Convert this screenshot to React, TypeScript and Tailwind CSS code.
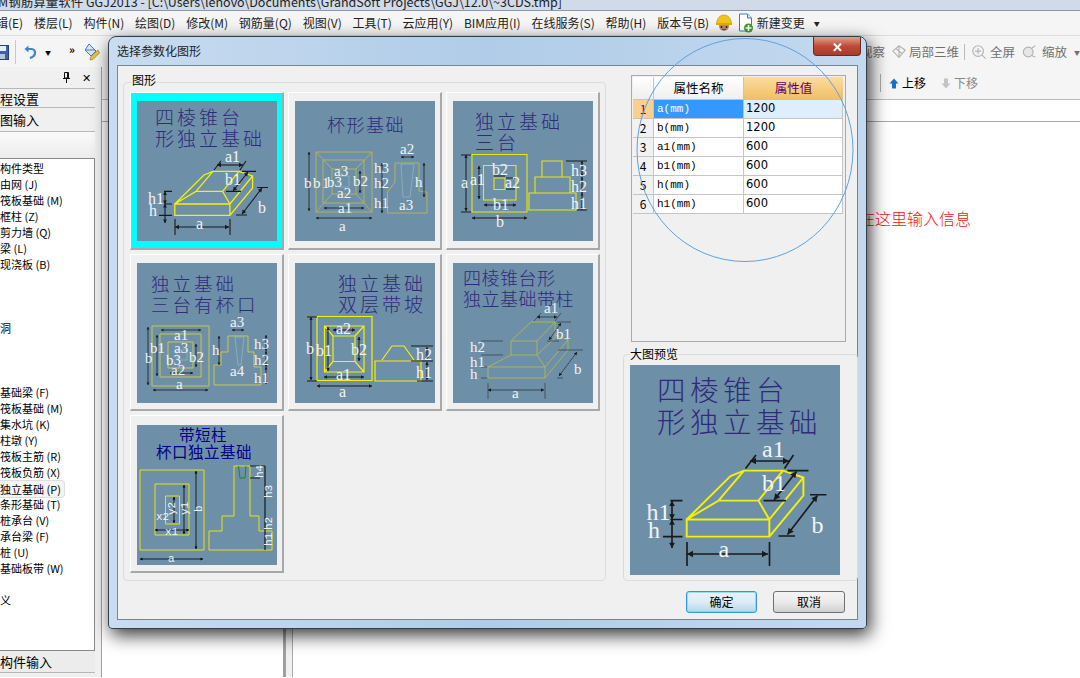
import React from "react";

const cjk = '"Noto Sans CJK SC", sans-serif';
const num = '"Liberation Serif", serif';
const black = "#1a1a1a";

const menus = ["辑(E)", "楼层(L)", "构件(N)", "绘图(D)", "修改(M)", "钢筋量(Q)", "视图(V)", "工具(T)", "云应用(Y)", "BIM应用(I)", "在线服务(S)", "帮助(H)", "版本号(B)"];

const listItems: [string, number][] = [
  ["构件类型", 168], ["由网 (J)", 184], ["筏板基础 (M)", 200], ["框柱 (Z)", 216], ["剪力墙 (Q)", 232], ["梁 (L)", 248], ["现浇板 (B)", 264],
  ["洞", 328], ["基础梁 (F)", 392], ["筏板基础 (M)", 408], ["集水坑 (K)", 424], ["柱墩 (Y)", 440], ["筏板主筋 (R)", 456], ["筏板负筋 (X)", 472],
  ["独立基础 (P)", 488], ["条形基础 (T)", 504], ["桩承台 (V)", 520], ["承台梁 (F)", 536], ["桩 (U)", 552], ["基础板带 (W)", 568], ["义", 600],
];

const rows = [
  ["1", "a(mm)", "1200"], ["2", "b(mm)", "1200"], ["3", "a1(mm)", "600"],
  ["4", "b1(mm)", "600"], ["5", "h(mm)", "600"], ["6", "h1(mm)", "600"],
];

// dimension line with arrow heads on both ends
function Dim({ x1, y1, x2, y2, s = 3, w = 0.8, c = black }: { x1: number; y1: number; x2: number; y2: number; s?: number; w?: number; c?: string }) {
  const len = Math.hypot(x2 - x1, y2 - y1) || 1;
  const ux = (x2 - x1) / len;
  const uy = (y2 - y1) / len;
  const head = (x: number, y: number, d: number) =>
    `${x},${y} ${x + d * ux * s - uy * s * 0.55},${y + d * uy * s + ux * s * 0.55} ${x + d * ux * s + uy * s * 0.55},${y + d * uy * s - ux * s * 0.55}`;
  return (
    <g>
      <line x1={x1} y1={y1} x2={x2} y2={y2} stroke={c} strokeWidth={w} />
      <polygon points={head(x1, y1, 1)} fill={c} />
      <polygon points={head(x2, y2, -1)} fill={c} />
    </g>
  );
}

function Ticks({ d, w = 0.8, c = black }: { d: string; w?: number; c?: string }) {
  return <path d={d} stroke={c} strokeWidth={w} fill="none" />;
}

function Title({ lines, size = 19, gap = 22, fill = "#2f2a7c", weight = 300 }: { lines: [string, number, number][]; size?: number; gap?: number; fill?: string; weight?: number }) {
  return (
    <g fontFamily={cjk} fontSize={size} fill={fill} fontWeight={weight}>
      {lines.map(([t, x, y]) => (
        <text key={t} x={x} y={y} letterSpacing={gap - size}>{t}</text>
      ))}
    </g>
  );
}

function Labels({ items, size = 14 }: { items: [string, number, number][]; size?: number }) {
  return (
    <g fontFamily={num} fontSize={size} fill="#f2f4f6">
      {items.map(([t, x, y], i) => (
        <text key={i} x={x} y={y}>{t}</text>
      ))}
    </g>
  );
}

function Drawing1() {
  return (
    <>
      <Title lines={[["四棱锥台", 18, 24], ["形独立基础", 18, 45]]} />
      <path d="M37.8 103H92.9V114.4H37.8ZM37.8 103L67 74L76 70.4H102L115.6 75V87L92.9 114.4M92.9 103L115.6 75M37.8 103L59 90.4H85.6L92.9 103M59 90.4L76 70.4M85.6 90.4L102 70.4" fill="none" stroke="#f4f00c" strokeWidth={1.3} />
      <Ticks w={1.1} d="M77 69L84 60M103 69L109 60M105 70.4H119M89 90.4H104M120 86.5H131M99 114H110M38 118V134M93 118V134M27 90.4H35M27 103H35M22 114.4H35" />
      <Dim x1={80} y1={64} x2={106} y2={64} s={4} w={1.1} />
      <Dim x1={111} y1={71} x2={96} y2={90} s={4} w={1.1} />
      <Dim x1={125} y1={87} x2={105} y2={113} s={4} w={1.1} />
      <Dim x1={38} y1={126} x2={92} y2={126} s={4} w={1.1} />
      <Dim x1={28} y1={90.5} x2={28} y2={103} s={3.5} w={1.1} />
      <Dim x1={28} y1={103} x2={28} y2={122} s={3.5} w={1.1} />
      <Labels size={16} items={[["a1", 88, 61], ["b1", 88, 84], ["b", 121, 112], ["h1", 11, 103], ["h", 12, 115], ["a", 59, 128]]} />
    </>
  );
}

function Drawing2() {
  const o = "#b0b35c";
  return (
    <>
      <Title lines={[["杯形基础", 32, 31]]} size={18} gap={19.5} />
      <path d="M21 51H77V111H21ZM28 59H69V102H28ZM37 68H61V93H37ZM21 51L37 68M77 51L61 68M21 111L37 93M77 111L61 93M100 62H124V90L132 91V112H92.5V91L100 81Z" fill="none" stroke={o} strokeWidth={1} />
      <path d="M106 63H119L115 96H108ZM43 75H54V86H43Z" fill="none" stroke="#92bcc0" strokeWidth={0.7} />
      <Dim x1={14} y1={51} x2={14} y2={110} s={2.5} />
      <Dim x1={21} y1={117} x2={77} y2={117} s={2.5} />
      <Dim x1={29} y1={107} x2={69} y2={107} s={2.5} />
      <Dim x1={65} y1={70} x2={65} y2={92} s={2.5} />
      <Dim x1={106} y1={56} x2={119} y2={56} s={2.5} />
      <Dim x1={129} y1={62} x2={129} y2={96} s={2.5} />
      <Dim x1={87} y1={62} x2={87} y2={112} s={2.5} />
      <Labels size={15} items={[["b", 9, 87], ["b", 18, 87], ["1", 27, 87], ["b3", 32, 86], ["a3", 39, 75], ["b2", 58, 85], ["a2", 42, 97], ["a1", 43, 112], ["a", 44, 130], ["a2", 105, 53], ["h3", 79, 72], ["h2", 79, 87], ["h", 120, 86], ["h1", 79, 107], ["a3", 104, 109]]} />
    </>
  );
}

function Drawing3() {
  return (
    <>
      <Title lines={[["独立基础", 22, 28], ["三台", 22, 49]]} />
      <path d="M19 53.5H74V111H19ZM30.5 64.5H63V99H30.5ZM41 77H52V88.5H41ZM76 92H123V109H76ZM82 76H117V92H82ZM89 60H109V76H89Z" fill="none" stroke="#e8e80c" strokeWidth={1.1} />
      <Dim x1={13} y1={54} x2={13} y2={110} s={3} w={1} />
      <Dim x1={26} y1={65} x2={26} y2={98} s={3} w={1} />
      <Dim x1={31} y1={104} x2={63} y2={104} s={3} w={1} />
      <Dim x1={19} y1={117} x2={74} y2={117} s={3} w={1} />
      <Dim x1={129} y1={60} x2={129} y2={75} s={2.5} w={1} />
      <Dim x1={129} y1={76} x2={129} y2={92} s={2.5} w={1} />
      <Dim x1={129} y1={92} x2={129} y2={109} s={2.5} w={1} />
      <Ticks w={1} d="M8 54H18M8 111H18M113 60H134M124 109H134M41 75H52M53 77H62M53 88H62" />
      <Labels size={16} items={[["a", 8, 87], ["a1", 17, 84], ["b2", 39, 74], ["a2", 52, 87], ["b1", 40, 109], ["b", 43, 126], ["h3", 118, 75], ["h2", 118, 91], ["h1", 118, 108]]} />
    </>
  );
}

function Drawing4() {
  const o = "#c4c84a";
  return (
    <>
      <Title lines={[["独立基础", 14, 28], ["三台有杯口", 14, 49]]} size={18.5} gap={21.5} />
      <path d="M15 63H72V123H15ZM23 71H64V114H23ZM31 79H56V105H31ZM91 73H111V89H117V104H124V122H77V102L84 102V89H91Z" fill="none" stroke={o} strokeWidth={1} />
      <path d="M98 74H107L104 102H101ZM40 87H50V97H40Z" fill="none" stroke="#92bcc0" strokeWidth={0.7} />
      <Dim x1={11} y1={64} x2={11} y2={122} s={2.5} />
      <Dim x1={16} y1={127} x2={71} y2={127} s={2.5} />
      <Dim x1={24} y1={67} x2={64} y2={67} s={2.5} />
      <Dim x1={33} y1={110} x2={56} y2={110} s={2.5} />
      <Dim x1={95} y1={67} x2={107} y2={67} s={2.5} />
      <Dim x1={82} y1={73} x2={82} y2={102} s={2.5} />
      <Dim x1={20} y1={72} x2={20} y2={113} s={2.5} />
      <Dim x1={59} y1={81} x2={59} y2={104} s={2.5} />
      <Dim x1={129} y1={72} x2={129} y2={88} s={2.5} />
      <Dim x1={129} y1={88} x2={129} y2={104} s={2.5} />
      <Dim x1={129} y1={104} x2={129} y2={121} s={2.5} />
      <Labels size={15} items={[["b", 8, 100], ["b1", 13, 90], ["a1", 37, 77], ["a3", 37, 90], ["b3", 29, 102], ["b2", 52, 99], ["a2", 34, 112], ["a", 39, 126], ["a3", 93, 64], ["h", 75, 92], ["h3", 117, 86], ["h2", 117, 102], ["a4", 93, 113], ["h1", 117, 120]]} />
    </>
  );
}

function Drawing5() {
  return (
    <>
      <Title lines={[["独立基础", 43, 28], ["双层带坡", 43, 49]]} />
      <path d="M22 53.5H77V117.5H22ZM29.5 63H69V109H29.5ZM38 73H60V98.5H38ZM29.5 63L38 73M69 63L60 73M29.5 109L38 98.5M69 109L60 98.5M80 98H126V118H80ZM87 97L97 83H109L119 97" fill="none" stroke="#f4f00c" strokeWidth={1.2} />
      <Ticks w={1} d="M12 54H22M12 118H22M116 83H138M116 98H138M122 118H138" />
      <Dim x1={16} y1={54} x2={16} y2={117} w={1} />
      <Dim x1={33} y1={64} x2={33} y2={108} w={1} />
      <Dim x1={38} y1={67} x2={60} y2={67} w={1} />
      <Dim x1={29} y1={114} x2={69} y2={114} w={1} />
      <Dim x1={22} y1={123} x2={77} y2={123} w={1} />
      <Dim x1={64} y1={74} x2={64} y2={98} w={1} />
      <Dim x1={132} y1={84} x2={132} y2={97} w={1} />
      <Dim x1={132} y1={99} x2={132} y2={117} w={1} />
      <Labels size={16} items={[["b", 11, 91], ["b1", 21, 93], ["a2", 41, 71], ["b2", 56, 92], ["a1", 41, 117], ["a", 44, 134], ["h2", 121, 97], ["h1", 121, 115]]} />
    </>
  );
}

function Drawing6() {
  const o = "#b9bd48";
  return (
    <>
      <Title lines={[["四棱锥台形", 10, 22], ["独立基础带柱", 10, 43]]} size={18} gap={18.5} />
      <path d="M35 104H92V115H35ZM58 78H84V92H58ZM58 78L78 59H102L84 78M102 59V75L84 92M35 104L58 92M92 104L84 92M92 104L115 77V87L92 115M102 72L115 77" fill="none" stroke={o} strokeWidth={0.8} />
      <Ticks d="M28 78H50M28 92H50M28 104H34M28 115H34M35 120V136M92 120V136M81 58L88 50M102 58L108 50M104 59H118M94 78H106M105 87H130M104 115H110" w={0.5} />
      <Dim x1={84} y1={54} x2={104} y2={54} w={0.6} />
      <Dim x1={108} y1={60} x2={96} y2={77} w={0.6} />
      <Dim x1={124} y1={89} x2={106} y2={113} w={0.6} />
      <Dim x1={35} y1={127} x2={91} y2={127} w={0.6} />
      <Labels size={15} items={[["a1", 91, 50], ["b1", 103, 76], ["h2", 17, 89], ["h1", 17, 104], ["h", 17, 116], ["b", 121, 111], ["a", 59, 135]]} />
    </>
  );
}

function Drawing7() {
  return (
    <>
      <Title lines={[["带短柱", 42, 16], ["杯口独立基础", 19, 33]]} size={15.5} gap={16} fill="#000088" weight={400} />
      <path d="M3 45H67V125H3ZM18 59H52V110H18ZM28.5 71H42.5V99H28.5ZM97 41V91H85V106H72V125H135V106H122V91H113V41Z" fill="none" stroke="#e4e40c" strokeWidth={1} />
      <path d="M101.5 41L103 53H108L109 41" fill="none" stroke="#128c20" strokeWidth={1} />
      <Ticks d="M113 41H128M113 53H123" w={0.8} c="#000" />
      <Dim x1={59} y1={46} x2={59} y2={124} s={2.5} c="#000" />
      <Dim x1={47} y1={60} x2={47} y2={109} s={2.5} c="#000" />
      <Dim x1={37} y1={72} x2={37} y2={98} s={2.5} c="#000" />
      <Dim x1={18} y1={105} x2={52} y2={105} s={2.5} c="#000" />
      <Dim x1={3} y1={134} x2={66} y2={134} s={2.5} c="#000" />
      <line x1={128} y1={41} x2={128} y2={125} stroke="#000" strokeWidth={1} />
      <g fontFamily='"Liberation Mono", monospace' fontSize={11} fill="#f2f4f6">
        <text x={28} y={110}>x1</text>
        <text x={19} y={95}>x2</text>
        <text x={31} y={137}>a</text>
        {([["y2", 38, 90], ["y1", 51, 90], ["b", 65, 87], ["h4", 126, 53], ["h3", 135, 73], ["h2", 135, 105], ["h1", 135, 121]] as [string, number, number][]).map(([t, x, y]) => (
          <text key={t} x={x} y={y} transform={`rotate(-90 ${x} ${y})`}>{t}</text>
        ))}
      </g>
    </>
  );
}

function Sketch({ size, children }: { size: number; children: React.ReactNode }) {
  return (
    <svg width={size} height={size} viewBox="0 0 140 140" className="block bg-[#6e8fa8]">
      {children}
    </svg>
  );
}

function Card({ selected, pt = "pt-2", children }: { selected?: boolean; pt?: string; children: React.ReactNode }) {
  return (
    <div className={`flex justify-center border-r-2 border-b-2 border-t border-l border-r-[#a8a8a8] border-b-[#a8a8a8] border-t-white border-l-white ${pt} ${selected ? "bg-[#00ffff]" : "bg-[#f0f0f0]"}`}>
      {children}
    </div>
  );
}

function HardHat() {
  return (
    <svg width="18" height="18" viewBox="0 0 18 18">
      <ellipse cx="9" cy="12" rx="5" ry="5" fill="#b98a68" />
      <path d="M1.5 10C2 4 5 1 9 1s7 3 7.5 9Z" fill="#f2c318" stroke="#b98a10" strokeWidth="0.6" />
      <rect x="1" y="9" width="16" height="2" fill="#e0aa10" />
      <circle cx="6.5" cy="13" r="0.9" fill="#222" />
      <circle cx="11.5" cy="13" r="0.9" fill="#222" />
      <path d="M7 15.5h4" stroke="#6a3c20" strokeWidth="0.8" />
    </svg>
  );
}

function NewDoc() {
  return (
    <svg width="16" height="20" viewBox="0 0 16 20">
      <path d="M1.5 1H9.5L13.5 5V18H1.5Z" fill="#fff" stroke="#3c7fb8" />
      <path d="M9.5 1V5H13.5" fill="#d8e8f4" stroke="#3c7fb8" />
      <circle cx="10.5" cy="15" r="4.5" fill="#3d9a2c" />
      <path d="M10.5 12V18M7.5 15H13.5" stroke="#fff" strokeWidth="1.6" />
    </svg>
  );
}

function ToolGlyph({ kind }: { kind: "cube" | "zoom" | "scale" }) {
  return (
    <svg width="16" height="16" viewBox="0 0 18 18" fill="none" stroke="#b4b4b4" strokeWidth="1.3">
      {kind === "cube" && <path d="M2 8L9 2L16 7L9 15ZM5.5 5L12.5 11M9 2V15" />}
      {kind === "zoom" && (
        <>
          <circle cx="8" cy="8" r="6" />
          <path d="M12.5 12.5L16.5 16.5M8 4.5V11.5M4.5 8H11.5" />
        </>
      )}
      {kind === "scale" && (
        <>
          <circle cx="7" cy="9" r="5.5" fill="#e6e6e6" />
          <path d="M11 4.5L15 2M11 13L15 15" />
        </>
      )}
    </svg>
  );
}

function SaveIcon() {
  return (
    <svg width="14" height="15" viewBox="0 0 14 15" className="-ml-[5px]">
      <rect x="0.5" y="0.5" width="13" height="14" fill="#3a62a8" stroke="#24427c" />
      <rect x="3" y="1" width="8" height="5" fill="#e8eef6" />
      <rect x="4" y="9" width="6" height="5" fill="#b8c4d4" />
    </svg>
  );
}

function UndoIcon() {
  return (
    <svg width="12" height="14" viewBox="0 0 12 14" fill="none">
      <path d="M2 4H7.5C10 4 11 6 11 7.5C11 10 9 12 6 13" stroke="#3c84cc" strokeWidth="2.2" />
      <path d="M4.5 0.5V7.5L0.5 4Z" fill="#3c84cc" />
    </svg>
  );
}

function PaintIcon() {
  return (
    <svg width="17" height="18" viewBox="0 0 17 18">
      <path d="M5 1L12 8L7 13L1 7Z" fill="#d8e4f2" stroke="#4d7cb0" />
      <path d="M1 7H11" stroke="#4d7cb0" />
      <path d="M14 7L15.5 10L9 16.5L6 17L6.5 14Z" fill="#e8c23c" stroke="#8a7420" strokeWidth="0.6" />
    </svg>
  );
}

function PinIcon() {
  return (
    <svg width="9" height="11" viewBox="0 0 9 11" fill="none" stroke="#111">
      <path d="M2.5 0.5H6.5V6H2.5ZM1 6.5H8M4.5 7V11" />
      <path d="M5.5 1V6" />
    </svg>
  );
}

function MoveArrow({ dir, color }: { dir: "up" | "down"; color: string }) {
  return (
    <svg width="10" height="11" viewBox="0 0 10 11" className={dir === "down" ? "rotate-180" : ""}>
      <path d="M5 0.5L9.5 5.5H7V10.5H3V5.5H0.5Z" fill={color} />
    </svg>
  );
}

export default function App() {
  return (
    <div className="relative h-[678px] w-[1080px] overflow-hidden bg-white text-[12px] text-black" style={{ fontFamily: cjk }}>
      {/* app title bar, cut off at the top */}
      <div className="h-[11px] overflow-hidden whitespace-nowrap bg-[#d0dae8] border-b border-[#8e98a4]">
        <div className="-mt-[7px] ml-[-2px] text-[12.5px] leading-[18px] text-[#222]">M钢筋算量软件 GGJ2013 - [C:\Users\lenovo\Documents\GrandSoft Projects\GGJ\12.0\~3CDS.tmp]</div>
      </div>

      {/* menu bar */}
      <div className="flex h-[25px] items-center gap-[10.8px] border-b border-[#dcdcdc] bg-[#f5f5f5] pl-0 text-[12px] text-[#222] whitespace-nowrap">
        <span className="-ml-[4px]">{menus[0]}</span>
        {menus.slice(1).map((m) => (
          <span key={m}>{m}</span>
        ))}
        <div className="-ml-[5px]"><HardHat /></div>
        <div className="-ml-[6px] flex items-center gap-[3px]">
          <NewDoc />
          <span>新建变更</span>
          <span className="ml-[6px] text-[6px]">▼</span>
        </div>
      </div>

      {/* toolbar row */}
      <div className="flex h-[31px] items-center justify-between bg-[#f5f5f5] pt-[1px] text-[#707070]">
        <div className="flex items-center">
          <SaveIcon />
          <div className="ml-[6px] h-[24px] w-px bg-[#c8c8c8]" />
          <div className="ml-[8px]"><UndoIcon /></div>
          <span className="ml-[9px] text-[6px] text-black">▼</span>
          <span className="ml-[18px] -mt-[6px] text-[11px] font-bold leading-none text-black">»</span>
          <div className="ml-[9px]"><PaintIcon /></div>
        </div>
        <div className="flex items-center whitespace-nowrap text-[12.5px]">
          <span>视察</span>
          <div className="ml-[6px]"><ToolGlyph kind="cube" /></div>
          <span className="ml-[2px]">局部三维</span>
          <div className="ml-[5px] h-[16px] w-px bg-[#bbb]" />
          <div className="ml-[6px]"><ToolGlyph kind="zoom" /></div>
          <span className="ml-[3px]">全屏</span>
          <div className="ml-[7px]"><ToolGlyph kind="scale" /></div>
          <span className="ml-[4px]">缩放</span>
          <span className="ml-[7px] text-[6px]">▼</span>
        </div>
      </div>

      <div className="flex h-[610px]">
        {/* left panel */}
        <div className="flex h-full w-[95px] shrink-0 flex-col bg-[#f0f0f0]">
          <div className="flex h-[21px] items-center justify-end gap-[11px] pr-[4px] text-[11px]">
            <PinIcon />
            <span>✕</span>
          </div>
          <div className="flex h-[20px] items-center border-t border-b border-[#b8b8b8] text-[13px] leading-none">程设置</div>
          <div className="flex h-[24px] items-center border-b border-[#b8b8b8] text-[13px] leading-none">图输入</div>
          <div className="h-[26px] bg-gradient-to-b from-[#fafafa] to-[#ececec]" />
          <div className="relative h-[493px] border-t border-r border-b border-[#888] bg-white">
            {listItems.map(([t, y]) => (
              <div key={y} className={`absolute left-0 whitespace-nowrap leading-[16px] text-[11px] ${t.startsWith("独立") ? "w-[65px] rounded-r-sm border border-l-0 border-[#ddd] bg-[#f4f4f4]" : ""}`} style={{ top: y - 158 - 9 }}>
                {t}
              </div>
            ))}
          </div>
          <div className="flex h-[22px] items-center border-b border-[#b8b8b8] bg-[#ececec] text-[13px]">构件输入</div>
        </div>

        {/* splitter */}
        <div className="h-full w-[7px] shrink-0 border-r border-[#a0a0a0] bg-[#f0f0f0]" />

        {/* main area */}
        <div className="flex min-w-0 flex-1 flex-col">
          <div className="flex h-[33px] items-center justify-end border-b border-[#bbb] bg-[#f5f5f5] pr-[102px] text-[12px]">
            <div className="mr-[8px] h-[18px] w-px bg-[#aaa]" />
            <MoveArrow dir="up" color="#1c6fc4" />
            <span className="ml-[3px]">上移</span>
            <div className="ml-[15px]"><MoveArrow dir="down" color="#c4c4c4" /></div>
            <span className="ml-[3px] text-[#888]">下移</span>
          </div>
          <div className="h-[22px] shrink-0 border-b border-[#a8a8a8]" />
          <div className="flex min-h-0 flex-1">
            <div className="w-[184px] shrink-0 border-r-[3px] border-[#a0a0a0]" />
            <div className="w-[7px] shrink-0 border-r border-[#a8a8a8] bg-[#f0f0f0]" />
            <div className="flex-1 pl-[566px] pt-[88px] text-[16px] leading-none text-[#ee1111] font-light whitespace-nowrap">在这里输入信息</div>
          </div>
        </div>
      </div>

      {/* dialog window */}
      <div className="absolute left-[108px] top-[36px] flex h-[593px] w-[759px] flex-col rounded-t-lg rounded-b border border-[#33404c] bg-gradient-to-r from-[#c9dcf0] via-[#b0cce8] to-[#c4d9ef] p-[8px] pt-0 shadow-[3px_6px_18px_rgba(0,0,0,0.8)]">
        <div className="relative flex h-[28px] shrink-0 items-center text-[12px] text-[#222] leading-none">
          选择参数化图形
          <div className="absolute right-[-3px] top-0 flex h-[19px] w-[48px] items-center justify-center rounded-b-[4px] border border-t-0 border-[#5a3028] bg-gradient-to-b from-[#e0a090] via-[#c04a38] to-[#a83c2c] text-[13px] font-bold leading-none text-white">✕</div>
        </div>
        <div className="flex min-h-0 flex-1 flex-col border border-[#7a8590] bg-[#f0f0f0] px-[5px] pt-[16px]">
          <div className="flex h-[499px] gap-[17px]">
            <fieldset className="relative h-[499px] w-[484px] rounded-sm border border-[#dcdcdc] pl-[6px] pr-[5px] pt-[9px]">
              <span className="absolute -top-[11px] left-[7px] bg-[#f0f0f0] px-px text-[12px] leading-[16px]">图形</span>
              <div className="grid grid-cols-[154px_154px_154px] grid-rows-[158px_157px_158px] gap-x-[4px] gap-y-[4px]">
                <Card selected><Sketch size={140}><Drawing1 /></Sketch></Card>
                <Card><Sketch size={140}><Drawing2 /></Sketch></Card>
                <Card><Sketch size={140}><Drawing3 /></Sketch></Card>
                <Card><Sketch size={140}><Drawing4 /></Sketch></Card>
                <Card><Sketch size={140}><Drawing5 /></Sketch></Card>
                <Card><Sketch size={140}><Drawing6 /></Sketch></Card>
                <Card pt="pt-[9px]"><Sketch size={140}><Drawing7 /></Sketch></Card>
              </div>
            </fieldset>

            <div className="flex w-[235px] flex-col">
              <div className="ml-[8px] mt-[-7px] h-[267px] w-[215px] border border-[#aaa] bg-[#f0f0f0] p-px">
                <div className="grid grid-cols-[21px_90px_99px] grid-rows-[23px_repeat(6,19px)]">
                  <div className="border-r border-b border-[#c4c4c4] bg-gradient-to-b from-white to-[#eee]" />
                  <div className="flex items-center justify-center border-r border-b border-[#c4c4c4] bg-gradient-to-b from-white to-[#efefef] text-[12.5px]">属性名称</div>
                  <div className="flex items-center justify-center bg-gradient-to-b from-[#fadca0] to-[#f2bd62] text-[12.5px] text-[#600070]">属性值</div>
                  {rows.map(([n, name, value], i) => (
                    <React.Fragment key={n}>
                      <div className={`flex items-center justify-center border-r border-b border-[#c4c4c4] text-[12px] ${i === 0 ? "bg-[#fbd08c] text-[#600070]" : "bg-[#f2f2f2]"}`}>{n}</div>
                      <div className={`flex items-center border-r border-b border-[#c4c4c4] pl-[3px] text-[11px] ${i === 0 ? "bg-[#3399ff] text-white" : "bg-white"}`} style={{ fontFamily: '"Liberation Mono", monospace' }}>{name}</div>
                      <div className={`flex items-center border-b border-r border-[#c4c4c4] pl-[2px] text-[11.5px] ${i === 0 ? "bg-[#deeefd]" : "bg-white"}`} style={{ fontFamily: '"DejaVu Sans", sans-serif' }}>{value}</div>
                    </React.Fragment>
                  ))}
                </div>
              </div>
              <fieldset className="relative mt-[12px] h-[227px] w-[235px] rounded-sm border border-[#dcdcdc] pl-[6px] pt-[10px]">
                <span className="absolute -top-[9px] left-[6px] bg-[#f0f0f0] text-[12px] leading-[16px]">大图预览</span>
                <Sketch size={210}><Drawing1 /></Sketch>
              </fieldset>
            </div>
          </div>
          <div className="mt-[10px] flex justify-end gap-[16px] pr-[7px]">
            <button className="h-[22px] w-[71px] rounded-[3px] border border-[#2f9ad6] bg-gradient-to-b from-[#eaf4fb] via-[#dcecf7] to-[#b4d6ea] text-[12px] leading-none shadow-[inset_0_0_0_1px_rgba(120,210,250,0.7)]">确定</button>
            <button className="h-[22px] w-[72px] rounded-[3px] border border-[#707070] bg-gradient-to-b from-[#f4f4f4] via-[#ebebeb] to-[#d0d0d0] text-[12px] leading-none">取消</button>
          </div>
        </div>
      </div>

      {/* blue ring drawn over the dialog in the capture */}
      <svg className="pointer-events-none absolute left-[630px] top-[30px]" width="230" height="240" viewBox="0 0 230 240" fill="none">
        <ellipse cx="115" cy="120" rx="108" ry="111.5" stroke="#5ba3e0" strokeWidth="1" />
      </svg>
    </div>
  );
}
